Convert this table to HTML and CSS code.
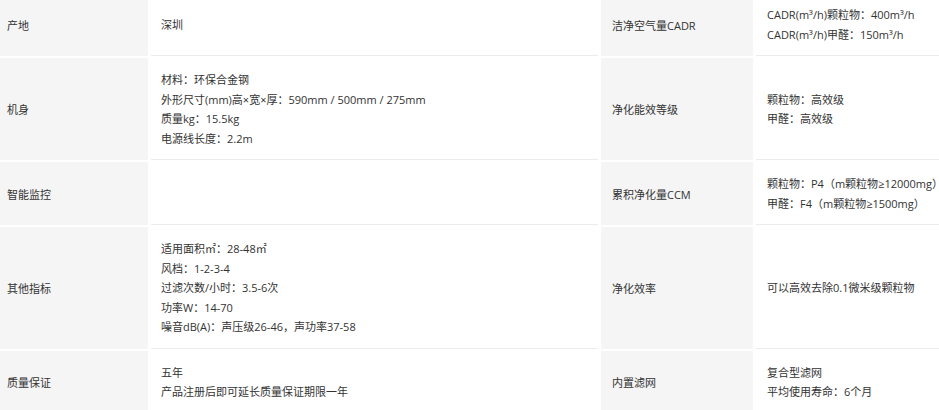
FILE: index.html
```html
<!DOCTYPE html>
<html lang="zh-CN">
<head>
    <meta charset="UTF-8">
    <meta name="viewport" content="width=device-width, initial-scale=1.0">
    <title>规格参数</title>
    <link rel="stylesheet" href="styles.css">
</head>
<body>
    <div class="specs">
        <!-- 第一行 -->
        <div class="label">产地</div>
        <div class="value">深圳</div>
        <div class="label">洁净空气量CADR</div>
        <div class="value">
            <p>CADR(m³/h)颗粒物：400m³/h</p>
            <p>CADR(m³/h)甲醛：150m³/h</p>
        </div>

        <!-- 第二行 -->
        <div class="label">机身</div>
        <div class="value">
            <p>材料：环保合金钢</p>
            <p>外形尺寸(mm)高×宽×厚：590mm / 500mm / 275mm</p>
            <p>质量kg：15.5kg</p>
            <p>电源线长度：2.2m</p>
        </div>
        <div class="label">净化能效等级</div>
        <div class="value">
            <p>颗粒物：高效级</p>
            <p>甲醛：高效级</p>
        </div>

        <!-- 第三行 -->
        <div class="label">智能监控</div>
        <div class="value"></div>
        <div class="label">累积净化量CCM</div>
        <div class="value">
            <p>颗粒物：P4（m颗粒物≥12000mg）</p>
            <p>甲醛：F4（m颗粒物≥1500mg）</p>
        </div>

        <!-- 第四行 -->
        <div class="label">其他指标</div>
        <div class="value">
            <p>适用面积㎡：28-48㎡</p>
            <p>风档：1-2-3-4</p>
            <p>过滤次数/小时：3.5-6次</p>
            <p>功率W：14-70</p>
            <p>噪音dB(A)：声压级26-46，声功率37-58</p>
        </div>
        <div class="label">净化效率</div>
        <div class="value">可以高效去除0.1微米级颗粒物</div>

        <!-- 第五行 -->
        <div class="label">质量保证</div>
        <div class="value">
            <p>五年</p>
            <p>产品注册后即可延长质量保证期限一年</p>
        </div>
        <div class="label">内置滤网</div>
        <div class="value">
            <p>复合型滤网</p>
            <p>平均使用寿命：6个月</p>
        </div>
    </div>
</body>
</html>
```

FILE: styles.css
```css
body { margin: 0; background: #fff; font-family: "Open Sans", "Noto Sans CJK TC", sans-serif; font-size: 11px; color: #333; overflow: hidden; }
.specs { display: grid; grid-template-columns: 148px 447px 152px 1fr; gap: 2px 3px; margin-top: -7px; }
.label, .value { display: flex; flex-direction: column; justify-content: center; line-height: 19.5px; }
.label { background: #f5f5f5; padding: 13px 8px 11px 7px; }
.value { padding: 12px 10px 11px 10px; border-bottom: 1px solid #ececec; }
.specs > .value:nth-child(4n) { padding-left: 11px; }
.specs > .label:nth-child(4n+3) { padding-left: 11px; }
p { margin: 0; white-space: nowrap; }
```
